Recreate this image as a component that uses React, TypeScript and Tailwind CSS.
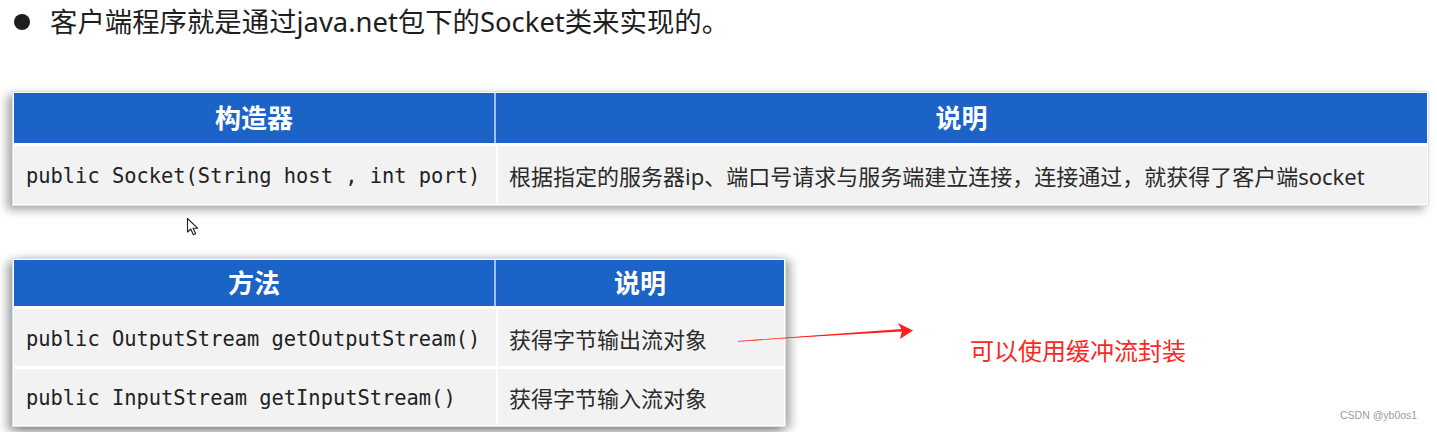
import React from "react";

const cjk = { fontFamily: '"Noto Sans", "Noto Sans CJK SC", sans-serif' };
const mono = { fontFamily: '"DejaVu Sans Mono", "Noto Sans CJK SC", monospace' };

function HeaderRow({ left, right, h }: { left: string; right: string; h: string }) {
  return (
    <div className={`grid grid-cols-[482px_1fr] bg-[#1b63c6] ${h}`}>
      <div className="flex items-center justify-center text-white font-bold text-[26px] border-r-2 border-[#9fc1ea]" style={cjk}>
        {left}
      </div>
      <div className="flex items-center justify-center text-white font-bold text-[26px]" style={cjk}>
        {right}
      </div>
    </div>
  );
}

function BodyRow({ code, desc, h }: { code: string; desc: string; h: string }) {
  return (
    <div className={`grid grid-cols-[482px_1fr] gap-[2px] mt-[3px] ${h}`}>
      <div className="flex items-center bg-[#f2f2f2] pl-[12px] pt-[3px] text-[20.4px] text-[#222222] whitespace-pre" style={mono}>
        {code}
      </div>
      <div className="flex items-center bg-[#f2f2f2] pl-[11px] pt-[3px] text-[22px] text-[#2a2a2a] whitespace-nowrap" style={cjk}>
        {desc}
      </div>
    </div>
  );
}

export default function App() {
  return (
    <div className="relative w-[1437px] h-[432px] overflow-hidden bg-white">
      <div className="flex items-center h-[44px] pl-[14px]">
        <div className="w-[16px] h-[16px] rounded-full bg-[#1e1e1e]" />
        <div className="ml-[20px] text-[27.4px] text-[#1e1e1e] leading-none" style={cjk}>
          客户端程序就是通过java.net包下的Socket类来实现的。
        </div>
      </div>

      <div className="ml-[12px] mt-[47px] w-[1417px] bg-white p-px shadow-[-5px_4px_9px_rgba(0,0,0,0.35)] border border-[#d6e3f3]">
        <HeaderRow left="构造器" right="说明" h="h-[50px]" />
        <BodyRow code="public Socket(String host , int port)" desc="根据指定的服务器ip、端口号请求与服务端建立连接，连接通过，就获得了客户端socket" h="h-[58px]" />
      </div>

      <div className="ml-[186px] mt-[11px] w-[16px] h-[20px]">
        <svg width="16" height="20" viewBox="0 0 16 20">
          <path d="M1.5 1.5 L1.5 15 L4.8 12 L7.3 17.8 L9.6 16.8 L7.1 11.2 L11.6 11.2 Z" fill="#ffffff" stroke="#222222" strokeWidth="1.1" strokeLinejoin="round" />
        </svg>
      </div>

      <div className="relative flex items-start mt-[21px]">
        <div className="ml-[12px] w-[774px] bg-white p-px shadow-[-5px_4px_9px_rgba(0,0,0,0.35),5px_2px_9px_rgba(0,0,0,0.3)] border border-[#d6e3f3]">
          <HeaderRow left="方法" right="说明" h="h-[46px]" />
          <BodyRow code="public OutputStream getOutputStream()" desc="获得字节输出流对象" h="h-[57px]" />
          <BodyRow code="public InputStream getInputStream()" desc="获得字节输入流对象" h="h-[56px]" />
        </div>
        <div className="ml-[184px] mt-[81px] text-[24px] text-[#ff2626] leading-none whitespace-nowrap" style={cjk}>
          可以使用缓冲流封装
        </div>
        <svg className="absolute left-[730px] top-[60px]" width="190" height="30" viewBox="0 0 190 30">
          <path d="M8 23 L172 11 L172 13.6 Z" fill="#ff2020" />
          <path d="M8 23 L172 12 L8 23.8 Z" fill="#ff2020" />
          <path d="M168 5 L183 12.5 L170 21 L172 12.5 Z" fill="#ff2020" />
        </svg>
      </div>

      <div className="absolute left-[1340px] top-[410px] text-[10.5px] text-[#9a9a9a] leading-none" style={{ fontFamily: '"Liberation Sans", Arial, sans-serif' }}>
        CSDN @yb0os1
      </div>
    </div>
  );
}
